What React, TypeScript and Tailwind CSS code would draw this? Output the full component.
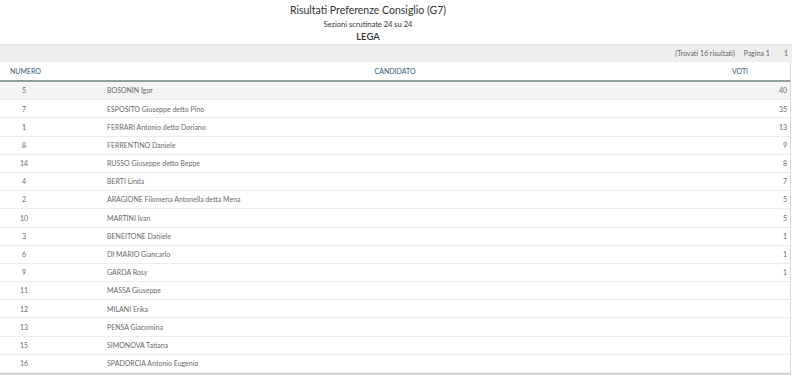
const rows: [number, string, number | null][] = [
  [5, "BOSONIN Igor", 40],
  [7, "ESPOSITO Giuseppe detto Pino", 35],
  [1, "FERRARI Antonio detto Doriano", 13],
  [8, "FERRENTINO Daniele", 9],
  [14, "RUSSO Giuseppe detto Beppe", 8],
  [4, "BERTI Linda", 7],
  [2, "ARAGIONE Filomena Antonella detta Mena", 5],
  [10, "MARTINI Ivan", 5],
  [3, "BENEITONE Daniele", 1],
  [6, "DI MARIO Giancarlo", 1],
  [9, "GARDA Rosy", 1],
  [11, "MASSA Giuseppe", null],
  [12, "MILANI Erika", null],
  [13, "PENSA Giacomina", null],
  [15, "SIMONOVA Tatiana", null],
  [16, "SPADORCIA Antonio Eugenio", null],
];

export default function App() {
  return (
    <div className="w-[800px] h-[383px] bg-white text-[#555] font-['Lato',sans-serif] overflow-hidden">
      <div className="w-[736px] flex flex-col items-center pt-[2px]">
        <h1 className="text-[10.5px] leading-[16px] text-[#333]">Risultati Preferenze Consiglio (G7)</h1>
        <p className="text-[7.5px] leading-[13px] text-[#333]">Sezioni scrutinate 24 su 24</p>
        <h2 className="text-[9.5px] leading-[12px] font-semibold text-[#333]">LEGA</h2>
      </div>
      <div className="w-[792px] mt-px">
        <div className="h-[18px] bg-[#eeeeee] border-t border-[#e4e4e4] flex items-center justify-end text-[7px] text-[#666]">
          <span className="mr-[9px]">(Trovati 16 risultati)</span>
          <span className="mr-[14px]">Pagina 1</span>
          <span className="mr-[4px]">1</span>
        </div>
        <div className="w-[791px] border-r border-[#d8d8d8] border-b-2 border-b-[#d6d6d6]">
          <div className="h-[20px] flex items-center text-[7px] text-[#2f5d78] border-b-2 border-[#8fa0a0]">
            <div className="w-[100px] pl-[10px]">NUMERO</div>
            <div className="flex-1 text-center">CANDIDATO</div>
            <div className="w-[100px] text-center">VOTI</div>
          </div>
          {rows.map(([n, name, v], i) => (
            <div
              key={n}
              className={`h-[18.2px] flex items-center text-[7px] text-[#6a6a6a] border-b border-[#ececec] ${i === 0 ? "bg-[#f4f4f4]" : "bg-white"}`}
            >
              <div className="w-[48px] text-center">{n}</div>
              <div className="w-[59px]" />
              <div className="flex-1">{name}</div>
              <div className="w-[60px] text-right pr-[3px]">{v ?? ""}</div>
            </div>
          ))}
        </div>
      </div>
    </div>
  );
}
